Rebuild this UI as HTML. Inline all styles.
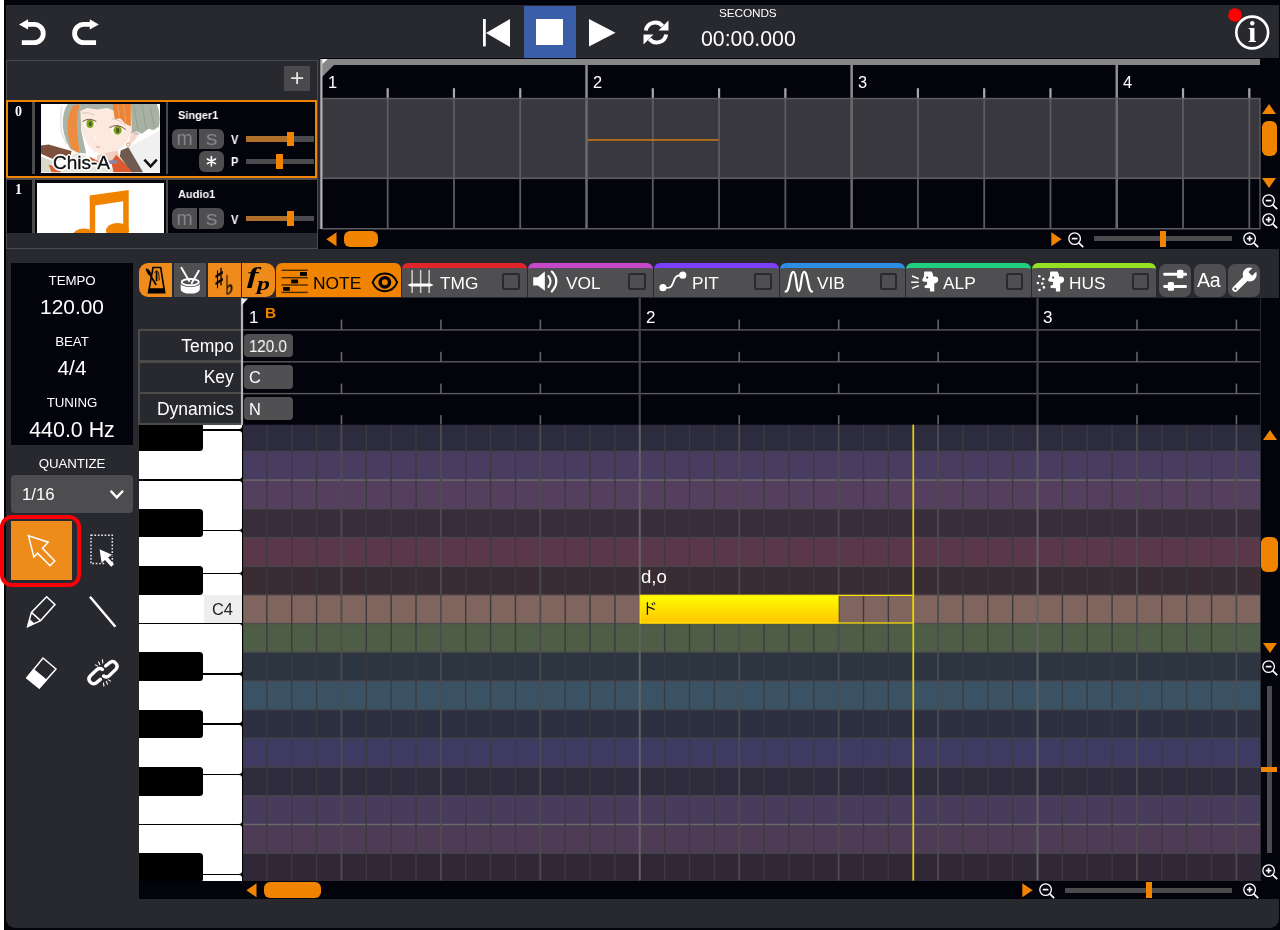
<!DOCTYPE html><html><head><meta charset="utf-8"><title>Editor</title><style>
*{box-sizing:border-box;margin:0;padding:0}
html,body{width:1280px;height:930px;overflow:hidden;background:#fff}
body{font-family:"Liberation Sans",sans-serif;color:#fff;position:relative}
.abs{position:absolute}
.t{position:absolute;white-space:nowrap;line-height:1;will-change:transform}
svg{position:absolute;overflow:visible}
</style></head><body>
<div class="abs" style="left:4px;top:0px;width:1276px;height:930px;background:#000;"></div>
<div class="abs" style="left:5px;top:0px;width:1275px;height:930px;background:#03030c;"></div>
<div class="abs" style="left:5.5px;top:5px;width:1273.2px;height:923px;background:#28292f;border-radius:0 0 9px 9px"></div>
<svg style="left:0;top:0" width="120" height="60" viewBox="0 0 120 60"><path d="M28.1 19.2 L19 24.4 L28.1 29.4 L28.1 26.8 L34.1 26.8 A6.75 6.75 0 0 1 34.1 40.3 L21.8 40.3 L21.8 45.1 L34.1 45.1 A11.6 11.6 0 0 0 34.1 21.9 L28.1 21.9 Z" fill="#fff"/><g transform="translate(117.85,0) scale(-1,1)"><path d="M28.1 19.2 L19 24.4 L28.1 29.4 L28.1 26.8 L34.1 26.8 A6.75 6.75 0 0 1 34.1 40.3 L21.8 40.3 L21.8 45.1 L34.1 45.1 A11.6 11.6 0 0 0 34.1 21.9 L28.1 21.9 Z" fill="#fff"/></g></svg>
<svg style="left:482px;top:18.5px" width="29" height="28" viewBox="0 0 29 28"><rect x="1" y="0" width="2.8" height="27.4" fill="#fff"/><path d="M28 0 L28 28 L4 14 Z" fill="#fff"/></svg>
<div class="abs" style="left:523.5px;top:5.5px;width:52px;height:52.5px;background:#3b5ea8;"></div>
<div class="abs" style="left:536px;top:18.8px;width:27px;height:26.6px;background:#fff;"></div>
<svg style="left:589px;top:19px" width="27" height="28" viewBox="0 0 27 28"><path d="M0 0 L26.5 13.7 L0 27.4 Z" fill="#fff"/></svg>
<svg style="left:641px;top:19px" width="30" height="27" viewBox="0 0 30 27"><g fill="none" stroke="#fff" stroke-width="4"><path d="M4.8 11.5 A9.6 9.6 0 0 1 21.6 7"/><path d="M25.2 15.5 A9.6 9.6 0 0 1 8.4 20"/></g><path d="M27.5 1.5 L27.5 11.5 L17.5 11.5 Z" fill="#fff"/><path d="M2.5 25.5 L2.5 15.5 L12.5 15.5 Z" fill="#fff"/></svg>
<div class="t" style="left:718.5px;top:8px;font-size:11.8px;letter-spacing:-0.1px">SECONDS</div>
<div class="t" style="left:700.5px;top:29px;font-size:21.3px;">00:00.000</div>
<svg style="left:1228px;top:8px" width="44" height="44" viewBox="0 0 44 44"><circle cx="7" cy="7" r="6.8" fill="#ff0000"/><circle cx="24.2" cy="24.5" r="15.9" fill="#28292f" stroke="#fff" stroke-width="2.6"/></svg>
<div class="t" style="left:1248px;top:17.2px;font-size:30px;font-family:'Liberation Serif',serif;font-weight:bold">i</div>
<div class="abs" style="left:6px;top:59.7px;width:311.5px;height:189px;background:#28292f;border:1px solid #4a4a4c"></div>
<div class="abs" style="left:284.3px;top:66px;width:26px;height:25.4px;background:#4a4a4c;"></div>
<div class="t" style="left:289.7px;top:66.2px;font-size:24.5px;color:#e4e4e4">+</div>
<div class="abs" style="left:6px;top:99.6px;width:311px;height:78px;background:#03030c;border:2.4px solid #f08300"></div>
<div class="abs" style="left:32.3px;top:102px;width:2.6px;height:72px;background:#4a4a4c;"></div>
<div class="abs" style="left:165.6px;top:102px;width:2.8px;height:72px;background:#4a4a4c;"></div>
<div class="t" style="left:15.4px;top:104.8px;font-size:14px;font-family:'Liberation Serif',serif;font-weight:bold">0</div>
<div class="abs" style="left:40.6px;top:104.3px;width:119.8px;height:68.3px;background:#fff;overflow:hidden">
<svg style="left:0;top:0" width="119.8" height="68.3" viewBox="45 42 1180 673" preserveAspectRatio="none">
<rect x="45" y="42" width="1180" height="673" fill="#fefefe"/>
<path d="M880 480 L1225 300 L1225 715 L1000 715 Z" fill="#f0f0f0"/>
<path d="M250 60 Q230 200 250 330 L300 440" fill="none" stroke="#e4e4e0" stroke-width="14"/>
<path d="M900 42 L1185 42 Q1230 150 1205 265 L1150 300 L1105 285 L1040 335 L985 310 L935 345 L890 250 Z" fill="#a7b2a5"/>
<path d="M960 60 L1000 300 M1040 50 L1080 290 M1120 60 L1160 270" stroke="#95a194" stroke-width="10" fill="none"/>
<path d="M310 42 L450 42 L440 300 L490 530 L400 520 L330 480 Q245 330 262 180 Q272 90 310 42 Z" fill="#a9b4a8"/>
<path d="M365 55 L425 48 Q385 200 402 330 L425 525 L345 485 Q292 330 312 200 Q322 120 365 55 Z" fill="#ee8b3e"/>
<path d="M430 60 L930 60 L940 300 Q900 430 800 500 L680 552 Q600 540 540 480 Q450 380 440 260 Z" fill="#fce9df"/>
<path d="M600 545 L800 500 L830 600 L700 640 L590 600 Z" fill="#f0cfc0"/>
<path d="M930 330 Q990 295 1005 340 Q965 420 900 462 Z" fill="#f6d9cc"/>
<path d="M960 335 Q1000 320 1010 345" stroke="#c9b6d0" stroke-width="14" fill="none"/>
<circle cx="903" cy="442" r="16" fill="#fff" stroke="#df8a42" stroke-width="9"/>
<path d="M430 42 L770 42 L770 112 L700 82 L600 96 L500 82 L430 112 Z" fill="#a8b2a6"/>
<path d="M750 42 L930 42 L930 262 L880 240 L825 182 L772 192 Z" fill="#ec8437"/>
<path d="M800 50 L820 170 M860 50 L880 220" stroke="#f3a05a" stroke-width="10" fill="none"/>
<!-- eyes -->
<ellipse cx="522" cy="238" rx="58" ry="42" fill="#fff6f0"/>
<ellipse cx="528" cy="236" rx="36" ry="42" fill="#86a526"/>
<ellipse cx="530" cy="238" rx="15" ry="24" fill="#4a5a18"/>
<path d="M455 215 Q520 170 590 215" stroke="#6b4a3c" stroke-width="9" fill="none"/>
<ellipse cx="795" cy="302" rx="66" ry="44" fill="#fff6f0"/>
<ellipse cx="800" cy="300" rx="40" ry="44" fill="#86a526"/>
<ellipse cx="800" cy="302" rx="16" ry="25" fill="#4a5a18"/>
<path d="M720 275 Q800 225 880 295" stroke="#6b4a3c" stroke-width="9" fill="none"/>
<path d="M450 130 Q510 118 570 150" stroke="#b9b6a4" stroke-width="6" fill="none"/>
<path d="M740 185 Q820 195 870 250" stroke="#b9b6a4" stroke-width="6" fill="none"/>
<circle cx="580" cy="372" r="9" fill="#fff"/>
<path d="M580 462 Q605 452 630 470 Q605 480 580 462 Z" fill="#e5a59c"/>
<!-- straps / clothes -->
<path d="M45 452 L120 442 L345 505 L335 565 L200 600 L45 532 Z" fill="#7d513c"/>
<path d="M45 560 L200 620 L260 715 L45 715 Z" fill="#d9d8cb"/>
<path d="M120 640 L210 665 L240 715 L150 715 Z" fill="#d9633a"/>
<path d="M400 520 L600 600 L700 640 L780 715 L250 715 L330 560 Z" fill="#e6e5dc"/>
<path d="M520 560 L620 610 L560 640 Z" fill="#d9542b"/>
<path d="M790 540 L965 715 L760 715 L735 610 Z" fill="#dc5a30"/>
<path d="M800 545 L975 715" stroke="#e9e2da" stroke-width="16" fill="none"/>
<path d="M830 500 L905 468 L1050 715 L940 715 L822 560 Z" fill="#6f5a50"/>
<path d="M700 600 L790 590 L795 625 L705 635 Z" fill="#8c86a8"/>
</svg>
<div class="t" style="left:12.6px;top:49.2px;font-size:19px;color:#111;-webkit-text-stroke:0.35px #111;text-shadow:-1.2px -1.2px 0 #fff,1.2px -1.2px 0 #fff,-1.2px 1.2px 0 #fff,1.2px 1.2px 0 #fff,0 1.7px 0 #fff,0 -1.7px 0 #fff,1.7px 0 0 #fff,-1.7px 0 0 #fff,0 0 3px #fff">Chis-A</div>
<svg style="left:102.4px;top:53.9px" width="16" height="12" viewBox="0 0 16 12"><path d="M1.4 1.6 L7.6 8.4 L13.8 1.6" fill="none" stroke="#111" stroke-width="2.5"/></svg>
</div>
<div class="t" style="left:178.3px;top:108.8px;font-size:11.6px;font-weight:bold;transform-origin:0 0;transform:scaleX(0.95)">Singer1</div>
<div class="abs" style="left:172.2px;top:128.5px;width:25.2px;height:20.8px;background:#4e4e50;border-radius:6px 0 0 6px"></div>
<div class="abs" style="left:198.8px;top:128.5px;width:25.2px;height:20.8px;background:#4e4e50;border-radius:0 6px 6px 0"></div>
<div class="t" style="left:172.2px;top:128.9px;width:25.2px;text-align:center;font-size:19.5px;color:#868688">m</div>
<div class="t" style="left:198.8px;top:128.9px;width:25.2px;text-align:center;font-size:19.5px;color:#868688;transform:scaleX(1.22)">s</div>
<div class="abs" style="left:198.8px;top:151.4px;width:25.2px;height:20.4px;background:#4e4e50;border-radius:6px"></div>
<svg style="left:198.8px;top:150.7px" width="25.2" height="20.6" viewBox="0 0 25.2 20.6"><g stroke="#fff" stroke-width="1.6" fill="none" stroke-linecap="round"><path d="M12.4 5.6 V15 M8.3 8 L16.5 12.6 M16.5 8 L8.3 12.6"/></g></svg>
<div class="t" style="left:231px;top:134.2px;font-size:12px;font-weight:bold;transform-origin:0 0;transform:scaleX(0.92)">V</div>
<div class="t" style="left:231px;top:156.4px;font-size:12px;font-weight:bold;transform-origin:0 0;transform:scaleX(0.92)">P</div>
<div class="abs" style="left:245.5px;top:136.3px;width:68px;height:5.4px;background:#4b4b4d;"></div>
<div class="abs" style="left:245.5px;top:136.3px;width:41.10000000000002px;height:5.4px;background:#b0702c;"></div>
<div class="abs" style="left:286.6px;top:131.60000000000002px;width:7.2px;height:14.6px;background:#f08300;"></div>
<div class="abs" style="left:245.5px;top:158.8px;width:68px;height:5.4px;background:#4b4b4d;"></div>
<div class="abs" style="left:276.2px;top:154.10000000000002px;width:7.2px;height:14.6px;background:#f08300;"></div>
<div class="abs" style="left:7px;top:177.6px;width:309.5px;height:55px;overflow:hidden">
<div class="abs" style="left:-7px;top:-177.6px;width:330px;height:300px">
<div class="abs" style="left:7px;top:177.6px;width:309.5px;height:60px;background:#03030c;border-top:2.6px solid #4a4a4c"></div>
<div class="abs" style="left:32.3px;top:180px;width:2.6px;height:60px;background:#4a4a4c;"></div>
<div class="abs" style="left:165.6px;top:180px;width:2.8px;height:60px;background:#4a4a4c;"></div>
<div class="t" style="left:15.4px;top:183.4px;font-size:14px;font-family:'Liberation Serif',serif;font-weight:bold">1</div>
<div class="abs" style="left:37px;top:183px;width:127px;height:60px;background:#fff;"></div>
<svg style="left:37px;top:183px" width="127" height="60" viewBox="0 0 127 60"><path d="M52.7 12.6 L91.7 7 L91.7 48 L86.2 48 L86.2 18.2 L58.2 22.6 L58.2 54 L52.7 54 Z" fill="#f08300"/><ellipse cx="47" cy="53" rx="11.5" ry="7.6" fill="#f08300"/><ellipse cx="80.5" cy="47.6" rx="11.5" ry="7.6" fill="#f08300"/></svg>
<div class="t" style="left:178.3px;top:188px;font-size:11.6px;font-weight:bold;transform-origin:0 0;transform:scaleX(0.95)">Audio1</div>
<div class="abs" style="left:172.2px;top:208.4px;width:25.2px;height:20.8px;background:#4e4e50;border-radius:6px 0 0 6px"></div>
<div class="abs" style="left:198.8px;top:208.4px;width:25.2px;height:20.8px;background:#4e4e50;border-radius:0 6px 6px 0"></div>
<div class="t" style="left:172.2px;top:208.8px;width:25.2px;text-align:center;font-size:19.5px;color:#868688">m</div>
<div class="t" style="left:198.8px;top:208.8px;width:25.2px;text-align:center;font-size:19.5px;color:#868688;transform:scaleX(1.22)">s</div>
<div class="t" style="left:231px;top:214px;font-size:12px;font-weight:bold;transform-origin:0 0;transform:scaleX(0.92)">V</div>
<div class="abs" style="left:245.5px;top:216px;width:68px;height:5.4px;background:#4b4b4d;"></div>
<div class="abs" style="left:245.5px;top:216px;width:41.10000000000002px;height:5.4px;background:#b0702c;"></div>
<div class="abs" style="left:286.6px;top:211.3px;width:7.2px;height:14.6px;background:#f08300;"></div>
</div></div>
<div class="abs" style="left:321.2px;top:58.4px;width:957.4px;height:190.6px;background:#03030c;"></div>
<div class="abs" style="left:317.6px;top:229.2px;width:10px;height:19.8px;background:#03030c;"></div>
<div class="abs" style="left:321.2px;top:58.8px;width:939.0999999999999px;height:6.4px;background:#878787;"></div>
<svg style="left:321.2px;top:58.8px" width="20" height="20" viewBox="0 0 20 20"><path d="M0 0 L19 0 L0 19 Z" fill="#878787"/><path d="M0 0 L6.6 0 L0 6.6 Z" fill="#fff"/></svg>
<div class="abs" style="left:322px;top:98.6px;width:938.3px;height:79.3px;background:#38383e;"></div>
<svg style="left:321px;top:59px" width="940.3" height="190" viewBox="321 59 940.3 190"><rect x="320.30" y="59" width="2.2" height="170" fill="#b4b4b4"/><rect x="386.58" y="88.2" width="2.2" height="10.3" fill="#a8a8a8"/><rect x="386.78" y="98.5" width="1.8" height="130.5" fill="#5c5c60"/><rect x="452.86" y="88.2" width="2.2" height="10.3" fill="#a8a8a8"/><rect x="453.06" y="98.5" width="1.8" height="130.5" fill="#5c5c60"/><rect x="519.14" y="88.2" width="2.2" height="10.3" fill="#a8a8a8"/><rect x="519.34" y="98.5" width="1.8" height="130.5" fill="#5c5c60"/><rect x="585.27" y="65" width="2.5" height="33.5" fill="#8e8e92"/><rect x="585.27" y="98.5" width="2.5" height="130.5" fill="#6b6b6e"/><rect x="651.70" y="88.2" width="2.2" height="10.3" fill="#a8a8a8"/><rect x="651.90" y="98.5" width="1.8" height="130.5" fill="#5c5c60"/><rect x="717.98" y="88.2" width="2.2" height="10.3" fill="#a8a8a8"/><rect x="718.18" y="98.5" width="1.8" height="130.5" fill="#5c5c60"/><rect x="784.26" y="88.2" width="2.2" height="10.3" fill="#a8a8a8"/><rect x="784.46" y="98.5" width="1.8" height="130.5" fill="#5c5c60"/><rect x="850.39" y="65" width="2.5" height="33.5" fill="#8e8e92"/><rect x="850.39" y="98.5" width="2.5" height="130.5" fill="#6b6b6e"/><rect x="916.82" y="88.2" width="2.2" height="10.3" fill="#a8a8a8"/><rect x="917.02" y="98.5" width="1.8" height="130.5" fill="#5c5c60"/><rect x="983.10" y="88.2" width="2.2" height="10.3" fill="#a8a8a8"/><rect x="983.30" y="98.5" width="1.8" height="130.5" fill="#5c5c60"/><rect x="1049.38" y="88.2" width="2.2" height="10.3" fill="#a8a8a8"/><rect x="1049.58" y="98.5" width="1.8" height="130.5" fill="#5c5c60"/><rect x="1115.51" y="65" width="2.5" height="33.5" fill="#8e8e92"/><rect x="1115.51" y="98.5" width="2.5" height="130.5" fill="#6b6b6e"/><rect x="1181.94" y="88.2" width="2.2" height="10.3" fill="#a8a8a8"/><rect x="1182.14" y="98.5" width="1.8" height="130.5" fill="#5c5c60"/><rect x="1248.22" y="88.2" width="2.2" height="10.3" fill="#a8a8a8"/><rect x="1248.42" y="98.5" width="1.8" height="130.5" fill="#5c5c60"/><rect x="322" y="97.8" width="938.3" height="1.5" fill="#5c5c5e"/><rect x="322" y="177.3" width="938.3" height="1.8" fill="#5c5c5e"/><rect x="322" y="228" width="938.3" height="1.5" fill="#5c5c5e"/><rect x="1259.3" y="98" width="1.4" height="131" fill="#5c5c5e"/><rect x="587.5" y="139.2" width="131" height="1.5" fill="#d07a10"/></svg>
<div class="t" style="left:328.0px;top:74.2px;font-size:16.4px;">1</div>
<div class="t" style="left:593.1px;top:74.2px;font-size:16.4px;">2</div>
<div class="t" style="left:858.2px;top:74.2px;font-size:16.4px;">3</div>
<div class="t" style="left:1123.3000000000002px;top:74.2px;font-size:16.4px;">4</div>
<svg style="left:326px;top:232px" width="11" height="15" viewBox="0 0 11 15"><path d="M10.5 0.3 L10.5 14.3 L0.3 7.3 Z" fill="#f08300"/></svg>
<div class="abs" style="left:344px;top:231px;width:34.4px;height:16.2px;background:#f08300;border-radius:6px"></div>
<svg style="left:1051.4px;top:232px" width="11" height="15" viewBox="0 0 11 15"><path d="M0.3 0.3 L0.3 14.3 L10.6 7.3 Z" fill="#f08300"/></svg>
<svg style="left:1067.5px;top:231.5px" width="16" height="16" viewBox="0 0 16 16"><circle cx="6.6" cy="6.6" r="5.8" fill="none" stroke="#fff" stroke-width="1.3"/><path d="M10.8 10.8 L15.2 15.2" stroke="#fff" stroke-width="1.7"/><path d="M3.8 6.6 H9.4" stroke="#fff" stroke-width="1.7" fill="none"/></svg>
<div class="abs" style="left:1094px;top:236.3px;width:138.3px;height:5.2px;background:#4b4b4d;"></div>
<div class="abs" style="left:1160.3px;top:231px;width:6px;height:16.2px;background:#f08300;"></div>
<svg style="left:1243px;top:231.5px" width="16" height="16" viewBox="0 0 16 16"><circle cx="6.6" cy="6.6" r="5.8" fill="none" stroke="#fff" stroke-width="1.3"/><path d="M10.8 10.8 L15.2 15.2" stroke="#fff" stroke-width="1.7"/><path d="M3.8 6.6 H9.4" stroke="#fff" stroke-width="1.7" fill="none"/><path d="M6.6 3.8 V9.4" stroke="#fff" stroke-width="1.7" fill="none"/></svg>
<svg style="left:1262.3px;top:103.5px" width="14" height="10" viewBox="0 0 14 10"><path d="M0 10 L14 10 L7 0 Z" fill="#f08300"/></svg>
<div class="abs" style="left:1261.7px;top:121px;width:15.6px;height:35.2px;background:#f08300;border-radius:6px"></div>
<svg style="left:1262.3px;top:178px" width="14" height="10" viewBox="0 0 14 10"><path d="M0 0 L14 0 L7 10 Z" fill="#f08300"/></svg>
<svg style="left:1261.8px;top:194px" width="16" height="16" viewBox="0 0 16 16"><circle cx="6.6" cy="6.6" r="5.8" fill="none" stroke="#fff" stroke-width="1.3"/><path d="M10.8 10.8 L15.2 15.2" stroke="#fff" stroke-width="1.7"/><path d="M3.8 6.6 H9.4" stroke="#fff" stroke-width="1.7" fill="none"/></svg>
<svg style="left:1261.8px;top:212.6px" width="16" height="16" viewBox="0 0 16 16"><circle cx="6.6" cy="6.6" r="5.8" fill="none" stroke="#fff" stroke-width="1.3"/><path d="M10.8 10.8 L15.2 15.2" stroke="#fff" stroke-width="1.7"/><path d="M3.8 6.6 H9.4" stroke="#fff" stroke-width="1.7" fill="none"/><path d="M6.6 3.8 V9.4" stroke="#fff" stroke-width="1.7" fill="none"/></svg>
<div class="abs" style="left:11px;top:263.2px;width:122px;height:182.2px;background:#03030c;"></div>
<div class="t" style="left:-27.700000000000003px;width:200px;text-align:center;top:274px;font-size:13.3px;letter-spacing:-0.1px">TEMPO</div>
<div class="t" style="left:-27.700000000000003px;width:200px;text-align:center;top:296.6px;font-size:20.9px;">120.00</div>
<div class="t" style="left:-28.5px;width:200px;text-align:center;top:335px;font-size:13.3px;letter-spacing:-0.1px">BEAT</div>
<div class="t" style="left:-28px;width:200px;text-align:center;top:357.6px;font-size:20.9px;">4/4</div>
<div class="t" style="left:-27.700000000000003px;width:200px;text-align:center;top:396.1px;font-size:13.3px;letter-spacing:-0.1px">TUNING</div>
<div class="t" style="left:-28.400000000000006px;width:200px;text-align:center;top:419.6px;font-size:21.4px;">440.0 Hz</div>
<div class="t" style="left:-28.299999999999997px;width:200px;text-align:center;top:457.2px;font-size:13.3px;letter-spacing:-0.1px">QUANTIZE</div>
<div class="abs" style="left:11px;top:474.6px;width:122px;height:38.6px;background:#4d4d4f;border-radius:4px"></div>
<div class="t" style="left:22.2px;top:487px;font-size:16.8px;">1/16</div>
<svg style="left:109px;top:489px" width="16" height="12" viewBox="0 0 16 12"><path d="M1.6 1.8 L7.8 8.4 L14 1.8" fill="none" stroke="#fff" stroke-width="2.4"/></svg>
<div class="abs" style="left:11.4px;top:520.6px;width:60.8px;height:59.9px;background:#ed8b1b;"></div>
<svg style="left:0;top:0" width="140" height="720" viewBox="0 0 140 720"><path d="M28.4 535.7 L48.2 542.2 L42.5 548.2 L54.8 561 L50 565.8 L37.5 553.2 L33.9 557 Z" fill="none" stroke="#fff" stroke-width="1.5" stroke-linejoin="miter"/><rect x="91" y="535.2" width="21.3" height="28.4" fill="none" stroke="#e8e8e8" stroke-width="1.5" stroke-dasharray="1.7 1.7"/><path d="M98.6 548.2 L99.4 563.5 L103.2 560 L107.5 567 L113.6 566.4 L108.6 557.6 L113.6 555.6 Z" fill="#28292f"/><path d="M99.6 549.2 L112 554.8 L108 557.4 L114 564.2 L111.2 566.8 L105 560 L101.6 563 Z" fill="#fff"/><path d="M27.6 626.6 L31.4 612.4 L46.6 596.8 L55 604.6 L40.6 620.6 Z M31.4 612.4 L40.6 620.6" fill="none" stroke="#fff" stroke-width="1.5" stroke-linejoin="miter"/><path d="M27.6 626.6 L29.6 619 L34.8 623.8 Z" fill="#fff"/><path d="M90 596.8 L115.4 626.8" stroke="#fff" stroke-width="2.5" fill="none"/><path d="M26.8 678 L43 658 L56 669 L39.2 688 Z" fill="none" stroke="#fff" stroke-width="1.5"/><path d="M26.8 678 L33.6 669.6 L46.4 680 L39.2 688 Z" fill="#fff" stroke="#fff" stroke-width="1.2"/><g fill="none" stroke="#fff" stroke-width="3.4" stroke-linecap="round"><path d="M100.4 679.4 L96 683 A4.6 4.6 0 0 1 90.2 676 L97 669.6 A4.6 4.6 0 0 1 102.4 669.4"/><path d="M105.6 666 L110 662.4 A4.6 4.6 0 0 1 116 669.2 L109.2 675.8 A4.6 4.6 0 0 1 103.6 676"/></g><g stroke="#fff" stroke-width="1.1"><path d="M98.4 661.6 L100 665 M102.4 659.4 L102.8 663.4 M95 664.6 L98 666.4 M107.6 684.6 L106.2 681 M104 686.4 L103.4 682.6 M111 681.4 L108 679.6"/></g></svg>
<div class="abs" style="left:0.3px;top:514.7px;width:81px;height:72.4px;border:4px solid #fb0007;border-radius:12px"></div>
<div class="abs" style="left:139px;top:263.3px;width:33.3px;height:33.5px;background:#ee8b1b;border-radius:9px 0 0 9px"></div>
<div class="abs" style="left:174px;top:263.3px;width:32.4px;height:33.5px;background:#4f4f51;"></div>
<div class="abs" style="left:207.8px;top:263.3px;width:32.9px;height:33.5px;background:#ee8b1b;"></div>
<div class="abs" style="left:242.2px;top:263.3px;width:32.6px;height:33.5px;background:#ee8b1b;border-radius:0 9px 9px 0"></div>
<svg style="left:0;top:0" width="1280" height="300" viewBox="0 0 1280 300"><path d="M153 267.5 L160.7 267.5 L164.7 292.6 L148.5 292.6 Z" fill="none" stroke="#000" stroke-width="1.6"/><path d="M149.2 288.2 L164.1 288.2 L164.9 293 L148.2 293 Z" fill="#000"/><path d="M146.3 268.6 L156.2 285" stroke="#000" stroke-width="1.7"/><path d="M147.4 270 L149.9 274.2" stroke="#000" stroke-width="3.2"/><path d="M156.6 271.2 L156.6 281.2" stroke="#000" stroke-width="1.7"/><path d="M154.6 272.8 Q156.6 268.8 158.6 272.8 L159.4 280.4" stroke="#000" stroke-width="0.8" fill="none"/><path d="M180.7 283.4 A9.55 3.7 0 0 0 199.8 283.4 L199.8 289.5 A9.55 4.1 0 0 1 180.7 289.5 Z" fill="#fff"/><ellipse cx="190.25" cy="282.1" rx="8.6" ry="3.15" fill="#4f4f51" stroke="#fff" stroke-width="1.9"/><path d="M181.4 267.8 L189.2 281" stroke="#fff" stroke-width="1.9" stroke-linecap="round"/><path d="M198.8 270.8 L191.8 283" stroke="#fff" stroke-width="1.9" stroke-linecap="round"/></svg>
<div class="t" style="left:214.2px;top:266.4px;font-size:21px;font-family:'DejaVu Sans',sans-serif;color:#000;font-weight:bold;-webkit-text-stroke:0.5px #000;transform-origin:0 0;transform:scale(1.05,1.3)">♯</div>
<div class="t" style="left:225px;top:272.6px;font-size:21px;font-family:'DejaVu Sans',sans-serif;color:#000;font-weight:bold;-webkit-text-stroke:0.4px #000;transform-origin:0 0;transform:scale(0.9,1.26)">♭</div>
<div class="t" style="left:246.6px;top:263.4px;font-size:24px;font-family:'Liberation Serif',serif;font-style:italic;font-weight:bold;color:#000;transform-origin:0 0;transform:scaleX(1.45)">f</div>
<div class="t" style="left:256.6px;top:275.2px;font-size:18.4px;font-family:'Liberation Serif',serif;font-style:italic;font-weight:bold;color:#000;transform-origin:0 0;transform:scaleX(1.4)">p</div>
<div class="abs" style="left:276px;top:263px;width:125px;height:34.4px;background:#f08300;border-radius:6px 6px 0 0"></div>
<svg style="left:0;top:0" width="1280" height="300" viewBox="0 0 1280 300"><rect x="281.5" y="269.6" width="26.3" height="1.4" fill="#4a2a00"/><rect x="281.5" y="277.0" width="26.3" height="1.4" fill="#4a2a00"/><rect x="281.5" y="284.3" width="26.3" height="1.4" fill="#4a2a00"/><rect x="281.5" y="291.7" width="26.3" height="1.4" fill="#4a2a00"/><rect x="300" y="272" width="6.9" height="3.9" fill="#000"/><rect x="291.2" y="279.5" width="6.9" height="3.9" fill="#000"/><rect x="283.1" y="287" width="6.7" height="3.8" fill="#000"/><path d="M372.6 282.4 C377.6 270.6 392 270.6 397.2 282.4 C392 294.2 377.6 294.2 372.6 282.4 Z" fill="none" stroke="#000" stroke-width="1.9"/><circle cx="384.8" cy="282.3" r="4.7" fill="none" stroke="#000" stroke-width="3.4"/></svg>
<div class="t" style="left:313.2px;top:274.6px;font-size:17.4px;color:#000">NOTE</div>
<div class="abs" style="left:402.3px;top:262.8px;width:124.6px;height:34.4px;background:#4f4f51;border-radius:6px 6px 0 0;border-top:5.4px solid #e0262b"></div>
<div class="abs" style="left:501.9px;top:272.7px;width:17.8px;height:17.6px;border:2px solid #2a2a2c;border-radius:2.5px;background:#4f4f51"></div>
<div class="t" style="left:439.7px;top:274.9px;font-size:17.3px;">TMG</div>
<div class="abs" style="left:528.22px;top:262.8px;width:124.6px;height:34.4px;background:#4f4f51;border-radius:6px 6px 0 0;border-top:5.4px solid #c548c8"></div>
<div class="abs" style="left:627.82px;top:272.7px;width:17.8px;height:17.6px;border:2px solid #2a2a2c;border-radius:2.5px;background:#4f4f51"></div>
<div class="t" style="left:565.62px;top:274.9px;font-size:17.3px;">VOL</div>
<div class="abs" style="left:654.14px;top:262.8px;width:124.6px;height:34.4px;background:#4f4f51;border-radius:6px 6px 0 0;border-top:5.4px solid #7c40fa"></div>
<div class="abs" style="left:753.74px;top:272.7px;width:17.8px;height:17.6px;border:2px solid #2a2a2c;border-radius:2.5px;background:#4f4f51"></div>
<div class="t" style="left:691.54px;top:274.9px;font-size:17.3px;">PIT</div>
<div class="abs" style="left:780.06px;top:262.8px;width:124.6px;height:34.4px;background:#4f4f51;border-radius:6px 6px 0 0;border-top:5.4px solid #2c8de2"></div>
<div class="abs" style="left:879.66px;top:272.7px;width:17.8px;height:17.6px;border:2px solid #2a2a2c;border-radius:2.5px;background:#4f4f51"></div>
<div class="t" style="left:817.4599999999999px;top:274.9px;font-size:17.3px;">VIB</div>
<div class="abs" style="left:905.98px;top:262.8px;width:124.6px;height:34.4px;background:#4f4f51;border-radius:6px 6px 0 0;border-top:5.4px solid #20cf80"></div>
<div class="abs" style="left:1005.58px;top:272.7px;width:17.8px;height:17.6px;border:2px solid #2a2a2c;border-radius:2.5px;background:#4f4f51"></div>
<div class="t" style="left:943.38px;top:274.9px;font-size:17.3px;">ALP</div>
<div class="abs" style="left:1031.9px;top:262.8px;width:124.6px;height:34.4px;background:#4f4f51;border-radius:6px 6px 0 0;border-top:5.4px solid #95e022"></div>
<div class="abs" style="left:1131.5px;top:272.7px;width:17.8px;height:17.6px;border:2px solid #2a2a2c;border-radius:2.5px;background:#4f4f51"></div>
<div class="t" style="left:1069.3000000000002px;top:274.9px;font-size:17.3px;">HUS</div>
<div class="abs" style="left:1158.9px;top:263.6px;width:32px;height:33px;background:#4f4f51;border-radius:7px"></div>
<div class="abs" style="left:1193.9px;top:263.6px;width:32px;height:33px;background:#4f4f51;border-radius:7px"></div>
<div class="abs" style="left:1228.2px;top:263.6px;width:32px;height:33px;background:#4f4f51;border-radius:7px"></div>
<svg style="left:0;top:0" width="1280" height="300" viewBox="0 0 1280 300"><rect x="411.40" y="270" width="1.5" height="23" fill="#cfcfcf"/><rect x="419.90" y="270" width="1.5" height="23" fill="#cfcfcf"/><rect x="428.40" y="270" width="1.5" height="23" fill="#cfcfcf"/><path d="M407.3 285 L410.7 283.5 L430.3 283.5 L433.7 285 L430.3 286.6 L410.7 286.6 Z" fill="#fff"/><path d="M533.22 277.2 L537.82 277.2 L544.82 271.4 L544.82 290.8 L537.82 285.4 L533.22 285.4 Z" fill="#fff"/><path d="M548.4200000000001 276 Q552.62 281.4 548.4200000000001 287" fill="none" stroke="#fff" stroke-width="2.1" stroke-linecap="round"/><path d="M551.82 271.6 Q560.82 281.4 551.82 291.4" fill="none" stroke="#fff" stroke-width="2.2" stroke-linecap="round"/><path d="M662.9399999999999 287.8 L669.14 287.6 Q671.54 287 672.74 283.6 L674.74 278.6 Q676.34 275.4 679.14 275.3 L682.74 275.2" fill="none" stroke="#fff" stroke-width="1.8"/><circle cx="662.9399999999999" cy="287.7" r="3.6" fill="#fff"/><circle cx="682.74" cy="275.2" r="3.6" fill="#fff"/><path d="M785.66 291.6 C790.06 291.6 789.4599999999999 271.8 793.4599999999999 271.8 C796.66 271.8 796.06 291 798.66 291 C801.4599999999999 291 800.8599999999999 271.8 804.06 271.8 C808.06 271.8 807.66 291.6 812.06 291.6" fill="none" stroke="#fff" stroke-width="2.3" stroke-linecap="round"/><path transform="translate(922.28,271.4)" d="M2.6 0 L9.1 0 Q10.6 1 11 5.1 L12 5.1 Q15.9 4.8 15.9 8.4 Q15.9 11.6 12 12 L12 20.1 L7.7 20.1 L7.7 16.8 L3.2 16.6 Q2 16.4 2.2 14.6 L4.8 13.2 L4.8 10.6 L1 10.2 Q0 10 0 8.6 L0.4 7.3 L1.8 4.8 L1.8 1.1 Q1.9 0.1 2.6 0 Z" fill="#fff"/><circle cx="927.18" cy="277.59999999999997" r="1.15" fill="#4d4d4f"/><path d="M911.98 276 L918.78 278.8 M911.1800000000001 282.2 L918.58 282.2 M911.98 288.4 L918.78 285.6" stroke="#fff" stroke-width="1.5" fill="none"/><path transform="translate(1048.2,271.4)" d="M2.6 0 L9.1 0 Q10.6 1 11 5.1 L12 5.1 Q15.9 4.8 15.9 8.4 Q15.9 11.6 12 12 L12 20.1 L7.7 20.1 L7.7 16.8 L3.2 16.6 Q2 16.4 2.2 14.6 L4.8 13.2 L4.8 10.6 L1 10.2 Q0 10 0 8.6 L0.4 7.3 L1.8 4.8 L1.8 1.1 Q1.9 0.1 2.6 0 Z" fill="#fff"/><circle cx="1053.1000000000001" cy="277.59999999999997" r="1.15" fill="#4d4d4f"/><circle cx="1039.3000000000002" cy="276.2" r="1.3" fill="#fff"/><circle cx="1043.3000000000002" cy="279" r="1.3" fill="#fff"/><circle cx="1037.9" cy="283" r="1.3" fill="#fff"/><circle cx="1042.3000000000002" cy="283.6" r="1.3" fill="#fff"/><circle cx="1043.9" cy="287.4" r="1.3" fill="#fff"/><circle cx="1039.5" cy="290" r="1.3" fill="#fff"/><rect x="1163.2" y="272.8" width="23.8" height="3" rx="1.4" fill="#fff"/><rect x="1177" y="269.7" width="6.4" height="8.6" rx="1.5" fill="#fff"/><rect x="1163.2" y="284.9" width="23.8" height="3" rx="1.4" fill="#fff"/><rect x="1167.8" y="282" width="6.2" height="8.7" rx="1.5" fill="#fff"/><g transform="translate(1249.7,274.5) rotate(45)"><circle cx="0" cy="0" r="7" fill="#fff"/><rect x="-2.6" y="-9" width="5.2" height="8.2" fill="#4f4f51"/><rect x="-2.9" y="4" width="5.8" height="19.4" rx="2.9" fill="#fff"/><circle cx="0" cy="20.2" r="1.2" fill="#4f4f51"/></g></svg>
<div class="t" style="left:1197.4px;top:270.6px;font-size:19.6px;letter-spacing:-0.3px">Aa</div>
<div class="abs" style="left:241.0px;top:298px;width:1019.3px;height:128px;background:#03030c;"></div>
<div class="abs" style="left:243.3px;top:424.7px;width:1017.0px;height:456px;background:#2d2b3e;"></div>
<div class="abs" style="left:138.2px;top:329px;width:103.4px;height:96px;background:#4b4b4a;"></div>
<div class="abs" style="left:140.2px;top:331.0px;width:101.2px;height:29.2px;background:#28292f;"></div>
<div class="t" style="left:138.6px;top:337.8px;width:94.8px;text-align:right;font-size:17.5px">Tempo</div>
<div class="abs" style="left:244.3px;top:333.8px;width:49px;height:23.2px;background:#505052;border-radius:4px"></div>
<div class="t" style="left:248.8px;top:337.8px;font-size:16.4px;transform-origin:0 0;transform:scaleX(0.92)">120.0</div>
<div class="abs" style="left:140.2px;top:362.6px;width:101.2px;height:29.2px;background:#28292f;"></div>
<div class="t" style="left:138.6px;top:369.40000000000003px;width:94.8px;text-align:right;font-size:17.5px">Key</div>
<div class="abs" style="left:244.3px;top:365.40000000000003px;width:49px;height:23.2px;background:#505052;border-radius:4px"></div>
<div class="t" style="left:248.8px;top:369.40000000000003px;font-size:16.4px;">C</div>
<div class="abs" style="left:140.2px;top:394.2px;width:101.2px;height:29.2px;background:#28292f;"></div>
<div class="t" style="left:138.6px;top:401.0px;width:94.8px;text-align:right;font-size:17.5px">Dynamics</div>
<div class="abs" style="left:244.3px;top:397.0px;width:49px;height:23.2px;background:#505052;border-radius:4px"></div>
<div class="t" style="left:248.8px;top:401.0px;font-size:16.4px;">N</div>
<svg style="left:0;top:0" width="1280" height="930" viewBox="0 0 1280 930"><rect x="242.0" y="329.2" width="1018.3" height="1.4" fill="#5a5a5c"/><rect x="242.0" y="361.1" width="1018.3" height="1.4" fill="#5a5a5c"/><rect x="242.0" y="392.90000000000003" width="1018.3" height="1.4" fill="#5a5a5c"/><rect x="340.69" y="319.6" width="1.6" height="10.4" fill="#646466"/><rect x="340.69" y="351.8" width="1.6" height="10.2" fill="#646466"/><rect x="340.69" y="383.6" width="1.6" height="10.2" fill="#646466"/><rect x="340.69" y="415.2" width="1.6" height="9.4" fill="#646466"/><rect x="440.13" y="319.6" width="1.6" height="10.4" fill="#646466"/><rect x="440.13" y="351.8" width="1.6" height="10.2" fill="#646466"/><rect x="440.13" y="383.6" width="1.6" height="10.2" fill="#646466"/><rect x="440.13" y="415.2" width="1.6" height="9.4" fill="#646466"/><rect x="539.57" y="319.6" width="1.6" height="10.4" fill="#646466"/><rect x="539.57" y="351.8" width="1.6" height="10.2" fill="#646466"/><rect x="539.57" y="383.6" width="1.6" height="10.2" fill="#646466"/><rect x="539.57" y="415.2" width="1.6" height="9.4" fill="#646466"/><rect x="738.45" y="319.6" width="1.6" height="10.4" fill="#646466"/><rect x="738.45" y="351.8" width="1.6" height="10.2" fill="#646466"/><rect x="738.45" y="383.6" width="1.6" height="10.2" fill="#646466"/><rect x="738.45" y="415.2" width="1.6" height="9.4" fill="#646466"/><rect x="837.89" y="319.6" width="1.6" height="10.4" fill="#646466"/><rect x="837.89" y="351.8" width="1.6" height="10.2" fill="#646466"/><rect x="837.89" y="383.6" width="1.6" height="10.2" fill="#646466"/><rect x="837.89" y="415.2" width="1.6" height="9.4" fill="#646466"/><rect x="937.33" y="319.6" width="1.6" height="10.4" fill="#646466"/><rect x="937.33" y="351.8" width="1.6" height="10.2" fill="#646466"/><rect x="937.33" y="383.6" width="1.6" height="10.2" fill="#646466"/><rect x="937.33" y="415.2" width="1.6" height="9.4" fill="#646466"/><rect x="1136.21" y="319.6" width="1.6" height="10.4" fill="#646466"/><rect x="1136.21" y="351.8" width="1.6" height="10.2" fill="#646466"/><rect x="1136.21" y="383.6" width="1.6" height="10.2" fill="#646466"/><rect x="1136.21" y="415.2" width="1.6" height="9.4" fill="#646466"/><rect x="1235.65" y="319.6" width="1.6" height="10.4" fill="#646466"/><rect x="1235.65" y="351.8" width="1.6" height="10.2" fill="#646466"/><rect x="1235.65" y="383.6" width="1.6" height="10.2" fill="#646466"/><rect x="1235.65" y="415.2" width="1.6" height="9.4" fill="#646466"/></svg>
<div class="t" style="left:249px;top:308.8px;font-size:17px;">1</div>
<div class="t" style="left:264.6px;top:304.6px;font-size:15.4px;color:#f08300;font-weight:bold">B</div>
<div class="t" style="left:645.6px;top:308.8px;font-size:17px;">2</div>
<div class="t" style="left:1043.4px;top:308.8px;font-size:17px;">3</div>
<div class="abs" style="left:138.6px;top:424.6px;width:104.6px;height:456.0px;background:#000;overflow:hidden">
<div class="abs" style="left:0;top:-41.15px;width:103.1px;height:45.67px;background:#fff;border-radius:0 3px 3px 0"></div>
<div class="abs" style="left:0;top:6.02px;width:103.1px;height:48.73px;background:#fff;border-radius:0 3px 3px 0"></div>
<div class="abs" style="left:0;top:56.25px;width:103.1px;height:48.72px;background:#fff;border-radius:0 3px 3px 0"></div>
<div class="abs" style="left:0;top:106.47px;width:103.1px;height:41.55px;background:#fff;border-radius:0 3px 3px 0"></div>
<div class="abs" style="left:0;top:149.53px;width:103.1px;height:48.72px;background:#fff;border-radius:0 3px 3px 0"></div>
<div class="abs" style="left:0;top:199.75px;width:103.1px;height:48.72px;background:#fff;border-radius:0 3px 3px 0"></div>
<div class="abs" style="left:0;top:249.97px;width:103.1px;height:48.73px;background:#fff;border-radius:0 3px 3px 0"></div>
<div class="abs" style="left:0;top:300.20px;width:103.1px;height:48.72px;background:#fff;border-radius:0 3px 3px 0"></div>
<div class="abs" style="left:0;top:350.43px;width:103.1px;height:48.72px;background:#fff;border-radius:0 3px 3px 0"></div>
<div class="abs" style="left:0;top:400.65px;width:103.1px;height:48.73px;background:#fff;border-radius:0 3px 3px 0"></div>
<div class="abs" style="left:0;top:450.88px;width:103.1px;height:34.38px;background:#fff;border-radius:0 3px 3px 0"></div>
<div class="abs" style="left:0;top:141.60px;width:64.8px;height:28.7px;background:#000;border-radius:0 3.5px 3.5px 0"></div>
<div class="abs" style="left:0;top:84.20px;width:64.8px;height:28.7px;background:#000;border-radius:0 3.5px 3.5px 0"></div>
<div class="abs" style="left:0;top:-1.90px;width:64.8px;height:28.7px;background:#000;border-radius:0 3.5px 3.5px 0"></div>
<div class="abs" style="left:0;top:227.70px;width:64.8px;height:28.7px;background:#000;border-radius:0 3.5px 3.5px 0"></div>
<div class="abs" style="left:0;top:285.10px;width:64.8px;height:28.7px;background:#000;border-radius:0 3.5px 3.5px 0"></div>
<div class="abs" style="left:0;top:342.50px;width:64.8px;height:28.7px;background:#000;border-radius:0 3.5px 3.5px 0"></div>
<div class="abs" style="left:0;top:428.60px;width:64.8px;height:28.7px;background:#000;border-radius:0 3.5px 3.5px 0"></div>
<div class="abs" style="left:65.6px;top:170.90px;width:38px;height:27.3px;background:#eee"></div>
<div class="t" style="left:73.4px;top:176.70px;font-size:16.4px;color:#222">C4</div>
</div>
<svg style="left:0;top:0" width="1280" height="930" viewBox="0 0 1280 930"><defs><clipPath id="gc"><rect x="243.3" y="424.8" width="1017.0" height="456.0"/></clipPath><linearGradient id="ng" x1="0" y1="0" x2="0" y2="1"><stop offset="0" stop-color="#ffff00"/><stop offset="1" stop-color="#ffc400"/></linearGradient></defs><g clip-path="url(#gc)"><rect x="242.0" y="594.90" width="1018.3" height="28.8" fill="#7f655d"/><rect x="242.0" y="566.20" width="1018.3" height="28.8" fill="#3a2c33"/><rect x="242.0" y="537.50" width="1018.3" height="28.8" fill="#5b3849"/><rect x="242.0" y="508.80" width="1018.3" height="28.8" fill="#382d3b"/><rect x="242.0" y="480.10" width="1018.3" height="28.8" fill="#553f5e"/><rect x="242.0" y="451.40" width="1018.3" height="28.8" fill="#483c60"/><rect x="242.0" y="422.70" width="1018.3" height="28.8" fill="#2d2b3e"/><rect x="242.0" y="623.60" width="1018.3" height="28.8" fill="#4e5e46"/><rect x="242.0" y="652.30" width="1018.3" height="28.8" fill="#2d3640"/><rect x="242.0" y="681.00" width="1018.3" height="28.8" fill="#3a5263"/><rect x="242.0" y="709.70" width="1018.3" height="28.8" fill="#2c3040"/><rect x="242.0" y="738.40" width="1018.3" height="28.8" fill="#3f3a62"/><rect x="242.0" y="767.10" width="1018.3" height="28.8" fill="#2f2c3d"/><rect x="242.0" y="795.80" width="1018.3" height="28.8" fill="#483c5c"/><rect x="242.0" y="824.50" width="1018.3" height="28.8" fill="#4e3c56"/><rect x="242.0" y="853.20" width="1018.3" height="28.8" fill="#302836"/><rect x="242.0" y="852.45" width="1018.3" height="1.5" fill="#4a4a4e" fill-opacity="0.8"/><rect x="242.0" y="823.75" width="1018.3" height="1.5" fill="#6c6c68" fill-opacity="0.95"/><rect x="242.0" y="795.05" width="1018.3" height="1.5" fill="#4a4a4e" fill-opacity="0.8"/><rect x="242.0" y="766.35" width="1018.3" height="1.5" fill="#4a4a4e" fill-opacity="0.8"/><rect x="242.0" y="737.65" width="1018.3" height="1.5" fill="#4a4a4e" fill-opacity="0.8"/><rect x="242.0" y="708.95" width="1018.3" height="1.5" fill="#4a4a4e" fill-opacity="0.8"/><rect x="242.0" y="680.25" width="1018.3" height="1.5" fill="#4a4a4e" fill-opacity="0.8"/><rect x="242.0" y="651.55" width="1018.3" height="1.5" fill="#4a4a4e" fill-opacity="0.8"/><rect x="242.0" y="622.85" width="1018.3" height="1.5" fill="#4a4a4e" fill-opacity="0.8"/><rect x="242.0" y="594.15" width="1018.3" height="1.5" fill="#4a4a4e" fill-opacity="0.8"/><rect x="242.0" y="565.45" width="1018.3" height="1.5" fill="#4a4a4e" fill-opacity="0.8"/><rect x="242.0" y="536.75" width="1018.3" height="1.5" fill="#4a4a4e" fill-opacity="0.8"/><rect x="242.0" y="508.05" width="1018.3" height="1.5" fill="#4a4a4e" fill-opacity="0.8"/><rect x="242.0" y="479.35" width="1018.3" height="1.5" fill="#6c6c68" fill-opacity="0.95"/><rect x="242.0" y="450.65" width="1018.3" height="1.5" fill="#4a4a4e" fill-opacity="0.8"/><rect x="242.0" y="421.95" width="1018.3" height="1.5" fill="#4a4a4e" fill-opacity="0.8"/><rect x="242.0" y="393.25" width="1018.3" height="1.5" fill="#4a4a4e" fill-opacity="0.8"/><rect x="241.00" y="424.6" width="2" height="456.0" fill="#626264"/><rect x="266.16" y="424.6" width="1.4" height="456.0" fill="#3b3b3f"/><rect x="291.02" y="424.6" width="1.4" height="456.0" fill="#3b3b3f"/><rect x="315.88" y="424.6" width="1.4" height="456.0" fill="#3b3b3f"/><rect x="340.54" y="424.6" width="1.8" height="456.0" fill="#4c4c4e"/><rect x="365.60" y="424.6" width="1.4" height="456.0" fill="#3b3b3f"/><rect x="390.46" y="424.6" width="1.4" height="456.0" fill="#3b3b3f"/><rect x="415.32" y="424.6" width="1.4" height="456.0" fill="#3b3b3f"/><rect x="439.98" y="424.6" width="1.8" height="456.0" fill="#4c4c4e"/><rect x="465.04" y="424.6" width="1.4" height="456.0" fill="#3b3b3f"/><rect x="489.90" y="424.6" width="1.4" height="456.0" fill="#3b3b3f"/><rect x="514.76" y="424.6" width="1.4" height="456.0" fill="#3b3b3f"/><rect x="539.42" y="424.6" width="1.8" height="456.0" fill="#4c4c4e"/><rect x="564.48" y="424.6" width="1.4" height="456.0" fill="#3b3b3f"/><rect x="589.34" y="424.6" width="1.4" height="456.0" fill="#3b3b3f"/><rect x="614.20" y="424.6" width="1.4" height="456.0" fill="#3b3b3f"/><rect x="638.76" y="424.6" width="2" height="456.0" fill="#626264"/><rect x="663.92" y="424.6" width="1.4" height="456.0" fill="#3b3b3f"/><rect x="688.78" y="424.6" width="1.4" height="456.0" fill="#3b3b3f"/><rect x="713.64" y="424.6" width="1.4" height="456.0" fill="#3b3b3f"/><rect x="738.30" y="424.6" width="1.8" height="456.0" fill="#4c4c4e"/><rect x="763.36" y="424.6" width="1.4" height="456.0" fill="#3b3b3f"/><rect x="788.22" y="424.6" width="1.4" height="456.0" fill="#3b3b3f"/><rect x="813.08" y="424.6" width="1.4" height="456.0" fill="#3b3b3f"/><rect x="837.74" y="424.6" width="1.8" height="456.0" fill="#4c4c4e"/><rect x="862.80" y="424.6" width="1.4" height="456.0" fill="#3b3b3f"/><rect x="887.66" y="424.6" width="1.4" height="456.0" fill="#3b3b3f"/><rect x="912.52" y="424.6" width="1.4" height="456.0" fill="#3b3b3f"/><rect x="937.18" y="424.6" width="1.8" height="456.0" fill="#4c4c4e"/><rect x="962.24" y="424.6" width="1.4" height="456.0" fill="#3b3b3f"/><rect x="987.10" y="424.6" width="1.4" height="456.0" fill="#3b3b3f"/><rect x="1011.96" y="424.6" width="1.4" height="456.0" fill="#3b3b3f"/><rect x="1036.52" y="424.6" width="2" height="456.0" fill="#626264"/><rect x="1061.68" y="424.6" width="1.4" height="456.0" fill="#3b3b3f"/><rect x="1086.54" y="424.6" width="1.4" height="456.0" fill="#3b3b3f"/><rect x="1111.40" y="424.6" width="1.4" height="456.0" fill="#3b3b3f"/><rect x="1136.06" y="424.6" width="1.8" height="456.0" fill="#4c4c4e"/><rect x="1161.12" y="424.6" width="1.4" height="456.0" fill="#3b3b3f"/><rect x="1185.98" y="424.6" width="1.4" height="456.0" fill="#3b3b3f"/><rect x="1210.84" y="424.6" width="1.4" height="456.0" fill="#3b3b3f"/><rect x="1235.50" y="424.6" width="1.8" height="456.0" fill="#4c4c4e"/><rect x="1260.56" y="424.6" width="1.4" height="456.0" fill="#3b3b3f"/></g><rect x="240.90" y="298" width="2.2" height="127" fill="#b4b4b4"/><rect x="638.66" y="298" width="2.2" height="127" fill="#434347"/><rect x="1036.42" y="298" width="2.2" height="127" fill="#434347"/><path d="M241.6 298.4 L248.0 298.4 L241.6 305.6 Z" fill="#eee"/><rect x="639.76" y="594.9" width="198.88" height="28.6" fill="url(#ng)"/><rect x="640.26" y="595.4" width="272.86" height="27.6" fill="none" stroke="#ffe600" stroke-width="1.2"/><rect x="912.42" y="424.6" width="1.7" height="456.0" fill="#e8d400"/></svg>
<div class="t" style="left:641px;top:568.4px;font-size:18.6px;">d,o</div>
<div class="t" style="left:641.8px;top:601px;font-size:15.6px;font-family:'Liberation Sans','Noto Sans CJK JP',sans-serif;color:#111">ド</div>
<div class="abs" style="left:138.6px;top:881px;width:1140px;height:18px;background:#03030c;"></div>
<div class="abs" style="left:1260.8px;top:298px;width:18px;height:601px;background:#03030c;"></div>
<svg style="left:246.4px;top:883px" width="11" height="15" viewBox="0 0 11 15"><path d="M10.5 0.3 L10.5 14.3 L0.3 7.3 Z" fill="#f08300"/></svg>
<div class="abs" style="left:264px;top:882.4px;width:57.2px;height:16px;background:#f08300;border-radius:6px"></div>
<svg style="left:1022.4px;top:883.4px" width="11" height="15" viewBox="0 0 11 15"><path d="M0.3 0.3 L0.3 14.3 L10.6 7.3 Z" fill="#f08300"/></svg>
<svg style="left:1039px;top:883px" width="16" height="16" viewBox="0 0 16 16"><circle cx="6.6" cy="6.6" r="5.8" fill="none" stroke="#fff" stroke-width="1.3"/><path d="M10.8 10.8 L15.2 15.2" stroke="#fff" stroke-width="1.7"/><path d="M3.8 6.6 H9.4" stroke="#fff" stroke-width="1.7" fill="none"/></svg>
<div class="abs" style="left:1065px;top:887.8px;width:167.3px;height:5px;background:#4b4b4d;"></div>
<div class="abs" style="left:1146px;top:882.3px;width:6px;height:16px;background:#f08300;"></div>
<svg style="left:1243px;top:883px" width="16" height="16" viewBox="0 0 16 16"><circle cx="6.6" cy="6.6" r="5.8" fill="none" stroke="#fff" stroke-width="1.3"/><path d="M10.8 10.8 L15.2 15.2" stroke="#fff" stroke-width="1.7"/><path d="M3.8 6.6 H9.4" stroke="#fff" stroke-width="1.7" fill="none"/><path d="M6.6 3.8 V9.4" stroke="#fff" stroke-width="1.7" fill="none"/></svg>
<svg style="left:1262.6px;top:429.6px" width="14" height="10" viewBox="0 0 14 10"><path d="M0 10 L14 10 L7 0 Z" fill="#f08300"/></svg>
<div class="abs" style="left:1261.4px;top:537px;width:16.2px;height:34.8px;background:#f08300;border-radius:6px"></div>
<svg style="left:1262.6px;top:643.4px" width="14" height="10" viewBox="0 0 14 10"><path d="M0 0 L14 0 L7 10 Z" fill="#f08300"/></svg>
<svg style="left:1261.8px;top:659.6px" width="16" height="16" viewBox="0 0 16 16"><circle cx="6.6" cy="6.6" r="5.8" fill="none" stroke="#fff" stroke-width="1.3"/><path d="M10.8 10.8 L15.2 15.2" stroke="#fff" stroke-width="1.7"/><path d="M3.8 6.6 H9.4" stroke="#fff" stroke-width="1.7" fill="none"/></svg>
<div class="abs" style="left:1267.4px;top:686px;width:4.8px;height:167px;background:#4b4b4d;"></div>
<div class="abs" style="left:1261.3px;top:767px;width:16.2px;height:5.4px;background:#f08300;"></div>
<svg style="left:1261.8px;top:864px" width="16" height="16" viewBox="0 0 16 16"><circle cx="6.6" cy="6.6" r="5.8" fill="none" stroke="#fff" stroke-width="1.3"/><path d="M10.8 10.8 L15.2 15.2" stroke="#fff" stroke-width="1.7"/><path d="M3.8 6.6 H9.4" stroke="#fff" stroke-width="1.7" fill="none"/><path d="M6.6 3.8 V9.4" stroke="#fff" stroke-width="1.7" fill="none"/></svg>
</body></html>
